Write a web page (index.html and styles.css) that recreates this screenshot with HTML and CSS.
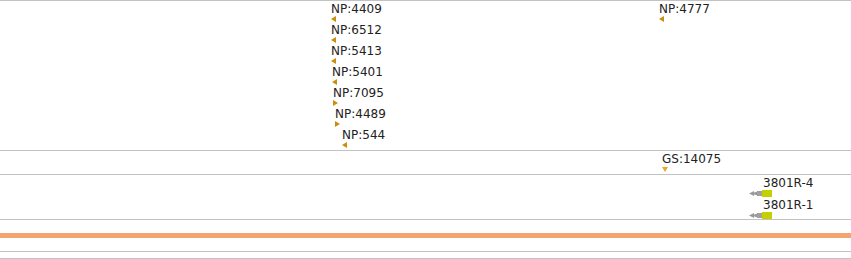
FILE: index.html
```html
<!DOCTYPE html>
<html lang="en">
<head>
    <meta charset="UTF-8">
    <title>Tracks</title>
    <link rel="stylesheet" href="styles.css">
</head>
<body>
<div class="track t-np">
    <div class="feat" style="left: 331px; top: 0px;"><span class="lbl">NP:4409</span><i class="tri left"></i></div>
    <div class="feat" style="left: 331px; top: 21px;"><span class="lbl">NP:6512</span><i class="tri left"></i></div>
    <div class="feat" style="left: 331px; top: 42px;"><span class="lbl">NP:5413</span><i class="tri left"></i></div>
    <div class="feat" style="left: 332px; top: 63px;"><span class="lbl">NP:5401</span><i class="tri left"></i></div>
    <div class="feat" style="left: 333px; top: 84px;"><span class="lbl">NP:7095</span><i class="tri right"></i></div>
    <div class="feat" style="left: 335px; top: 105px;"><span class="lbl">NP:4489</span><i class="tri right"></i></div>
    <div class="feat" style="left: 342px; top: 126px;"><span class="lbl">NP:544</span><i class="tri left"></i></div>
    <div class="feat" style="left: 659px; top: 0px;"><span class="lbl">NP:4777</span><i class="tri left"></i></div>
</div>
<div class="track t-gs">
    <div class="feat" style="left: 662px; top: 0px;"><span class="lbl">GS:14075</span><i class="tri down"></i></div>
</div>
<div class="track t-gene">
    <div class="gene" style="left: 749px; top: 1px;"><span class="lbl">3801R-4</span><svg width="24" height="7" viewBox="0 0 24 7"><polygon points="0,3.5 5,1 5,6" fill="#9a9a9a"/><polygon points="4,3.5 9,1 9,6" fill="#9a9a9a"/><rect x="4" y="2.5" width="10" height="2" fill="#9a9a9a"/><rect x="8" y="1" width="6" height="5" fill="#a0a0a0"/><rect x="13" y="0" width="10" height="7" fill="#c4d000"/></svg></div>
    <div class="gene" style="left: 749px; top: 23px;"><span class="lbl">3801R-1</span><svg width="24" height="7" viewBox="0 0 24 7"><polygon points="0,3.5 5,1 5,6" fill="#9a9a9a"/><polygon points="4,3.5 9,1 9,6" fill="#9a9a9a"/><rect x="4" y="2.5" width="10" height="2" fill="#9a9a9a"/><rect x="8" y="1" width="6" height="5" fill="#a0a0a0"/><rect x="13" y="0" width="10" height="7" fill="#c4d000"/></svg></div>
</div>
<div class="spacer"></div>
<div class="band"></div>
<div class="track t-empty"></div>
<div class="track t-last"></div>
</body>
</html>
```

FILE: styles.css
```css
body {
    margin: 0;
    background: #fff;
    font-family: "DejaVu Sans", sans-serif;
    font-size: 12px;
    color: #222;
    overflow: hidden;
}

.track {
    position: relative;
    border-top: 1px solid #c2c2c2;
}

.t-np {
    height: 149px;
}

.t-gs {
    height: 23px;
}

.t-gene {
    height: 44px;
}

.spacer {
    border-top: 1px solid #c2c2c2;
    height: 13px;
}

.band {
    height: 5px;
    background-color: #f4a46e;
}

.t-empty {
    margin-top: 13px;
    height: 6px;
}

.t-last {
    height: 6px;
}

.feat, .gene {
    position: absolute;
    display: flex;
    flex-direction: column;
    align-items: flex-start;
}

.lbl {
    line-height: 14px;
    white-space: nowrap;
}

.feat .lbl {
    padding-top: 1px;
}

.gene .lbl {
    margin-left: 14px;
}

.gene svg {
    display: block;
}

.tri {
    display: block;
    width: 0;
    height: 0;
}

.tri.left {
    border-top: 3px solid transparent;
    border-bottom: 3px solid transparent;
    border-right: 5px solid #cc8e0a;
}

.tri.right {
    border-top: 3px solid transparent;
    border-bottom: 3px solid transparent;
    border-left: 5px solid #cc8e0a;
}

.tri.down {
    border-left: 3px solid transparent;
    border-right: 3px solid transparent;
    border-top: 5px solid #f0a626;
    margin-top: 1px;
}
```
